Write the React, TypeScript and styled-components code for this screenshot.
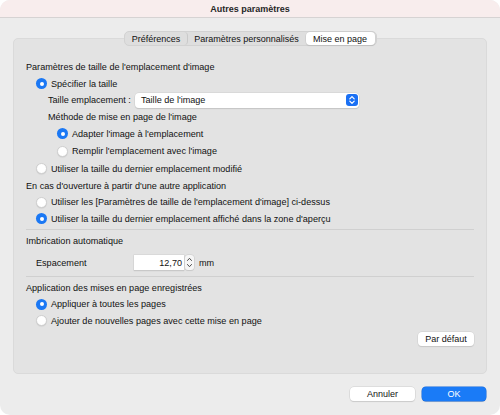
import React from "react";
import styled, { createGlobalStyle } from "styled-components";

const Global = createGlobalStyle`
  html, body { margin: 0; padding: 0; background: #ffffff; }
  body { font-family: "Liberation Sans", Arial, sans-serif; }
  * { box-sizing: border-box; }
`;

const Window = styled.div`
  width: 500px;
  height: 415px;
  background: #ececec;
  border-radius: 10px;
  overflow: hidden;
  display: flex;
  flex-direction: column;
  color: #111111;
  font-size: 9.1px;
`;

const TitleBar = styled.div`
  height: 18px;
  flex: none;
  background: #f8eded;
  border-bottom: 1px solid #d6d3d3;
  display: flex;
  align-items: center;
  justify-content: center;
  font-weight: bold;
  font-size: 9px;
  color: #262626;
`;

const Body = styled.div`
  flex: 1;
  display: flex;
  flex-direction: column;
  padding: 13px 13px 0 13px;
`;

const TabBar = styled.div`
  align-self: center;
  display: flex;
  align-items: center;
  height: 15px;
  padding: 1px;
  background: #dedede;
  border: 1px solid #d2d2d2;
  border-radius: 5px;
  margin-bottom: -8px;
  position: relative;
  z-index: 1;
`;

const Tab = styled.div<{ $active?: boolean; $w: number; $sep?: boolean }>`
  width: ${(p) => p.$w}px;
  height: 13px;
  display: flex;
  align-items: center;
  justify-content: center;
  font-size: 9px;
  color: #111;
  border-radius: 4px;
  background: ${(p) => (p.$active ? "#ffffff" : "transparent")};
  box-shadow: ${(p) => (p.$active ? "0 0 0 0.5px #c8c8c8, 0 1px 1px rgba(0,0,0,0.12)" : "none")};
  border-right: ${(p) => (p.$sep ? "1px solid #c9c9c9" : "none")};
`;

const Panel = styled.div`
  height: 336px;
  background: #e3e3e3;
  border: 1px solid #dadada;
  border-radius: 5px;
  padding: 20px 12px 0 12px;
  display: flex;
  flex-direction: column;
`;

const Row = styled.div<{ $h?: number; $indent?: number; $mt?: number }>`
  height: ${(p) => p.$h ?? 17}px;
  margin-top: ${(p) => p.$mt ?? 0}px;
  padding-left: ${(p) => p.$indent ?? 0}px;
  display: flex;
  align-items: center;
  white-space: nowrap;
`;

const Separator = styled.div<{ $mt: number }>`
  height: 1px;
  background: #d0d0d0;
  margin-top: ${(p) => p.$mt}px;
  flex: none;
`;

const RadioCircle = styled.span<{ $on?: boolean }>`
  width: 11px;
  height: 11px;
  border-radius: 50%;
  flex: none;
  margin-right: 4px;
  display: flex;
  align-items: center;
  justify-content: center;
  background: ${(p) => (p.$on ? "#1b78f4" : "#ffffff")};
  border: ${(p) => (p.$on ? "none" : "1px solid #cfcfcf")};
  box-shadow: ${(p) => (p.$on ? "none" : "0 0.5px 1px rgba(0,0,0,0.1)")};
  &::after {
    content: "";
    display: ${(p) => (p.$on ? "block" : "none")};
    width: 4px;
    height: 4px;
    border-radius: 50%;
    background: #ffffff;
  }
`;

const Label = styled.span<{ $w?: number }>`
  width: ${(p) => (p.$w ? `${p.$w}px` : "auto")};
  flex: none;
`;

const Select = styled.div`
  width: 224px;
  height: 15px;
  background: #ffffff;
  border-radius: 4px;
  box-shadow: 0 0 0 0.5px #cfcfcf, 0 1px 1px rgba(0,0,0,0.18);
  display: flex;
  align-items: center;
  justify-content: space-between;
  padding: 0 1px 0 6px;
`;

const SelectButton = styled.span`
  width: 12px;
  height: 12px;
  border-radius: 3px;
  background: #1a70f4;
  display: flex;
  align-items: center;
  justify-content: center;
`;

const NumberField = styled.div`
  width: 50px;
  height: 15px;
  background: #ffffff;
  box-shadow: 0 0 0 0.5px #cfcfcf, 0 1px 1px rgba(0,0,0,0.15);
  display: flex;
  align-items: center;
  justify-content: flex-end;
  padding-right: 2px;
`;

const Stepper = styled.span`
  width: 9px;
  height: 15px;
  margin-left: 1px;
  background: #f6f6f6;
  border-radius: 3px;
  box-shadow: 0 0 0 0.5px #c8c8c8, 0 1px 1px rgba(0,0,0,0.1);
  display: flex;
  align-items: center;
  justify-content: center;
`;

const Unit = styled.span`
  margin-left: 5px;
`;

const Button = styled.div<{ $primary?: boolean; $w: number }>`
  width: ${(p) => p.$w}px;
  height: 14px;
  border-radius: 4px;
  display: flex;
  align-items: center;
  justify-content: center;
  font-size: 9px;
  background: ${(p) => (p.$primary ? "#1a7bf7" : "#ffffff")};
  color: ${(p) => (p.$primary ? "#ffffff" : "#111111")};
  box-shadow: ${(p) =>
    p.$primary
      ? "0 0 0 0.5px #1467d8, 0 1px 1px rgba(0,0,0,0.15)"
      : "0 0 0 0.5px #cdcdcd, 0 1px 1px rgba(0,0,0,0.15)"};
`;

const ButtonRow = styled.div<{ $mt: number; $gap?: number }>`
  display: flex;
  justify-content: flex-end;
  gap: ${(p) => p.$gap ?? 0}px;
  margin-top: ${(p) => p.$mt}px;
`;

const Footer = styled(ButtonRow)`
  padding-right: 1px;
`;

const Radio: React.FC<{ on?: boolean; indent: number; h?: number; mt?: number; children: React.ReactNode }> = ({
  on,
  indent,
  h,
  mt,
  children,
}) => (
  <Row $indent={indent} $h={h} $mt={mt}>
    <RadioCircle $on={on} />
    <span>{children}</span>
  </Row>
);

const SelectArrows = () => (
  <svg width="8" height="10" viewBox="0 0 8 10">
    <path d="M1.8 3.8 L4 1.6 L6.2 3.8" fill="none" stroke="#fff" strokeWidth="1.2" strokeLinecap="round" strokeLinejoin="round" />
    <path d="M1.8 6.2 L4 8.4 L6.2 6.2" fill="none" stroke="#fff" strokeWidth="1.2" strokeLinecap="round" strokeLinejoin="round" />
  </svg>
);

const StepperArrows = () => (
  <svg width="7" height="13" viewBox="0 0 7 13">
    <path d="M1.5 4.5 L3.5 2.3 L5.5 4.5" fill="none" stroke="#4a4a4a" strokeWidth="1" strokeLinecap="round" strokeLinejoin="round" />
    <path d="M1.5 8.5 L3.5 10.7 L5.5 8.5" fill="none" stroke="#4a4a4a" strokeWidth="1" strokeLinecap="round" strokeLinejoin="round" />
  </svg>
);

export default function App() {
  return (
    <>
      <Global />
      <Window>
        <TitleBar>Autres paramètres</TitleBar>
        <Body>
          <TabBar>
            <Tab $w={62} $sep>Préférences</Tab>
            <Tab $w={118}>Paramètres personnalisés</Tab>
            <Tab $w={69} $active>Mise en page</Tab>
          </TabBar>
          <Panel>
            <Row $h={16}>Paramètres de taille de l'emplacement d'image</Row>
            <Radio on indent={10}>Spécifier la taille</Radio>
            <Row $h={16} $indent={22}>
              <Label $w={87}>Taille emplacement :</Label>
              <Select>
                <span>Taille de l'image</span>
                <SelectButton>
                  <SelectArrows />
                </SelectButton>
              </Select>
            </Row>
            <Row $indent={22}>Méthode de mise en page de l'image</Row>
            <Radio on indent={31}>Adapter l'image à l'emplacement</Radio>
            <Radio indent={31} h={18}>Remplir l'emplacement avec l'image</Radio>
            <Radio indent={10}>Utiliser la taille du dernier emplacement modifié</Radio>
            <Row>En cas d'ouverture à partir d'une autre application</Row>
            <Radio indent={10} h={16}>Utiliser les [Paramètres de taille de l'emplacement d'image] ci-dessus</Radio>
            <Radio on indent={10}>Utiliser la taille du dernier emplacement affiché dans la zone d'aperçu</Radio>
            <Separator $mt={2} />
            <Row $h={16} $mt={3}>Imbrication automatique</Row>
            <Row $mt={5} $indent={10}>
              <Label $w={98}>Espacement</Label>
              <NumberField>12,70</NumberField>
              <Stepper>
                <StepperArrows />
              </Stepper>
              <Unit>mm</Unit>
            </Row>
            <Separator $mt={5} />
            <Row $h={16} $mt={3}>Application des mises en page enregistrées</Row>
            <Radio on indent={10} h={16}>Appliquer à toutes les pages</Radio>
            <Radio indent={10}>Ajouter de nouvelles pages avec cette mise en page</Radio>
            <ButtonRow $mt={3}>
              <Button $w={56}>Par défaut</Button>
            </ButtonRow>
          </Panel>
          <Footer $mt={13} $gap={7}>
            <Button $w={65}>Annuler</Button>
            <Button $w={64} $primary>OK</Button>
          </Footer>
        </Body>
      </Window>
    </>
  );
}
